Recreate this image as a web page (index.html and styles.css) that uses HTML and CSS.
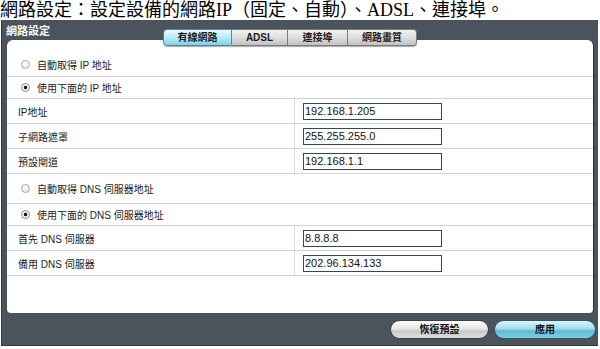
FILE: index.html
```html
<!DOCTYPE html>
<html lang="zh-Hant">
<head>
<meta charset="utf-8">
<title>網路設定</title>
<link rel="stylesheet" href="styles.css">
</head>
<body>
<h1 class="caption">網路設定：設定設備的網路IP（固定、自動）、ADSL、連接埠。</h1>
<div class="frame">
  <div class="frame-head">
    <div class="frame-title">網路設定</div>
    <div class="tabs">
      <span class="tab tab-active tab-w1">有線網路</span>
      <span class="tab tab-w2">ADSL</span>
      <span class="tab tab-w3">連接埠</span>
      <span class="tab tab-w1">網路畫質</span>
    </div>
  </div>
  <div class="panel">
    <div class="row row-radio row-first"><span class="radio"></span>自動取得 IP 地址</div>
    <div class="row row-radio"><span class="radio radio-on"></span>使用下面的 IP 地址</div>
    <div class="row row-field"><div class="label">IP地址</div><div class="value"><input class="input" type="text" value="192.168.1.205" readonly></div></div>
    <div class="row row-field"><div class="label">子網路遮罩</div><div class="value"><input class="input" type="text" value="255.255.255.0" readonly></div></div>
    <div class="row row-field"><div class="label">預設閘道</div><div class="value"><input class="input" type="text" value="192.168.1.1" readonly></div></div>
    <div class="row row-radio row-tall"><span class="radio"></span>自動取得 DNS 伺服器地址</div>
    <div class="row row-radio"><span class="radio radio-on"></span>使用下面的 DNS 伺服器地址</div>
    <div class="row row-field"><div class="label">首先 DNS 伺服器</div><div class="value"><input class="input" type="text" value="8.8.8.8" readonly></div></div>
    <div class="row row-field"><div class="label">備用 DNS 伺服器</div><div class="value"><input class="input" type="text" value="202.96.134.133" readonly></div></div>
  </div>
  <div class="actions">
    <button class="btn btn-gray" type="button">恢復預設</button>
    <button class="btn btn-blue" type="button">應用</button>
  </div>
</div>
</body>
</html>
```
FILE: styles.css
```css
* { box-sizing: border-box; margin: 0; padding: 0; }
html, body { background: #fff; }
body {
  width: 600px;
  height: 349px;
  overflow: hidden;
  font-family: "Liberation Sans", "Noto Sans CJK TC", sans-serif;
  color: #222;
}
.caption {
  height: 20px;
  font: normal 18px/20px "Liberation Serif", "Noto Sans CJK TC", serif;
  color: #000;
  white-space: nowrap;
}
.frame {
  margin-left: 1px;
  width: 597px;
  height: 326px;
  background: #4b535d;
  border-left: 1px solid #343a41;
  border-bottom: 1px solid #30363c;
  display: flex;
  flex-direction: column;
}
.frame-head {
  height: 20px;
  display: flex;
  align-items: flex-start;
}
.frame-title {
  width: 161px;
  padding: 4px 0 0 4px;
  font: bold 11px/14px "Liberation Sans", "Noto Sans CJK TC", sans-serif;
  color: #fff;
}
.tabs {
  position: relative;
  z-index: 1;
  margin-top: 9px;
  height: 17px;
  display: flex;
  border-radius: 4px;
  box-shadow: 0 1px 1px rgba(0,0,0,0.35);
}
.tab {
  height: 17px;
  display: flex;
  align-items: center;
  justify-content: center;
  font: bold 10px/1 "Liberation Sans", "Noto Sans CJK TC", sans-serif;
  color: #1d1d1d;
  background: linear-gradient(#f2f2f2, #dcdcdc 55%, #c2c2c2);
  border: 1px solid #7b7b7b;
  border-left: none;
}
.tab:first-child { border-left: 1px solid #5d8591; border-radius: 4px 0 0 4px; }
.tab:last-child { border-radius: 0 4px 4px 0; }
.tab-active {
  background: linear-gradient(#e9fbff, #b8ecf7 50%, #7fd2e7);
  border-color: #5d8591;
}
.tab-w1 { width: 69px; }
.tab-w2 { width: 56px; }
.tab-w3 { width: 60px; }
.panel {
  margin-left: 5px;
  width: 587px;
  height: 273px;
  background: #fff;
  border-radius: 6px 6px 4px 4px;
  border-right: 1px solid #2c3137;
  padding-top: 13px;
}
.row {
  display: flex;
  align-items: center;
  border-bottom: 1px solid #d3d3d3;
  font-size: 10px;
  color: #222;
  white-space: nowrap;
}
.row-radio { height: 22px; padding-left: 14px; }
.row-first { height: 24px; }
.row-tall { height: 30px; }
.row-field { height: 25px; }
.radio {
  flex: none;
  width: 9px;
  height: 9px;
  margin-right: 7px;
  border-radius: 50%;
  border: 1px solid #a9a9a9;
  background: radial-gradient(circle at 40% 40%, #fff, #e4e4e4);
}
.radio-on {
  border-color: #8a8a8a;
  background: radial-gradient(circle, #1e1e1e 0 1.6px, #fff 2.2px, #e8e8e8);
}
.label {
  width: 288px;
  align-self: stretch;
  display: flex;
  align-items: center;
  padding-left: 11px;
  border-right: 1px solid #d9d9d9;
}
.value {
  padding-left: 8px;
  display: flex;
  align-items: center;
}
.input {
  width: 139px;
  height: 17px;
  border: 1px solid #33494f;
  padding: 0 1px;
  font: 11px/15px "Liberation Sans", sans-serif;
  color: #111;
  background: #fff;
  outline: none;
}
.actions {
  display: flex;
  justify-content: flex-end;
  gap: 5px;
  padding: 7px 2px 0 0;
}
.btn {
  height: 19px;
  border-radius: 10px;
  font: bold 10px/1 "Liberation Sans", "Noto Sans CJK TC", sans-serif;
  color: #151515;
  cursor: pointer;
}
.btn-gray {
  width: 99px;
  border: 1px solid #3b3f44;
  background: linear-gradient(#fdfdfd, #e6e6e6 45%, #c9c9c9 60%, #dcdcdc);
}
.btn-blue {
  width: 102px;
  border: 1px solid #2c5763;
  background: linear-gradient(#dff6fb, #9fdcec 45%, #5dbad3 60%, #7fd0e4);
}
```
